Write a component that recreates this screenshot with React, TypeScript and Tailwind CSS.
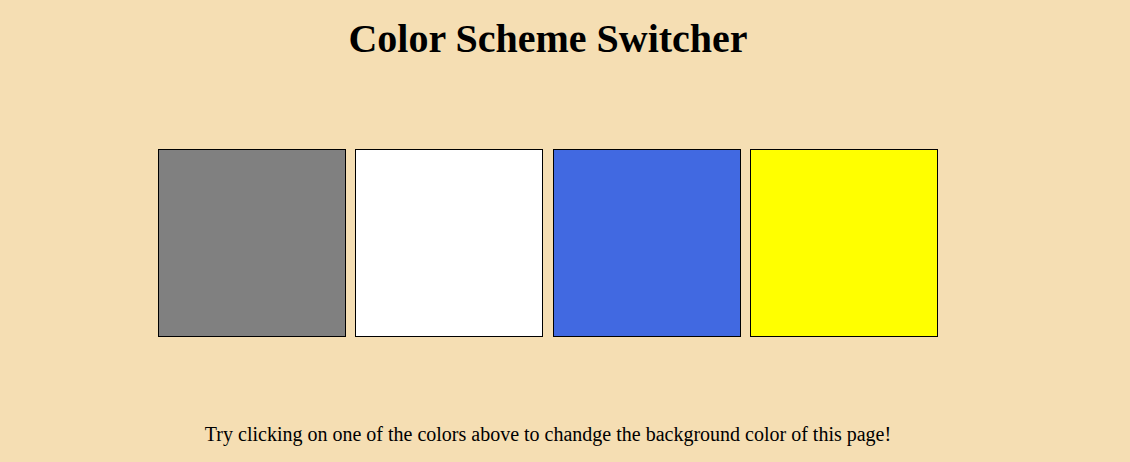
const swatches = ["#808080", "#ffffff", "#4169e1", "#ffff00"];

export default function App() {
  return (
    <div className="min-h-[462px] w-full bg-[#f5deb3] overflow-hidden" style={{ fontFamily: '"Liberation Serif", "Times New Roman", serif' }}>
      <div className="w-[1096px] flex flex-col items-center text-black">
        <h1 className="mt-[17px] text-[40px] font-bold leading-[44px]">Color Scheme Switcher</h1>

        <div className="mt-[88px] flex gap-[9.5px]">
          {swatches.map((c) => (
            <button
              key={c}
              className="w-[188px] h-[188px] border border-black"
              style={{ backgroundColor: c }}
            />
          ))}
        </div>

        <p className="mt-[86px] text-[20px] leading-[22px]">
          Try clicking on one of the colors above to chandge the background color of this page!
        </p>
      </div>
    </div>
  );
}
